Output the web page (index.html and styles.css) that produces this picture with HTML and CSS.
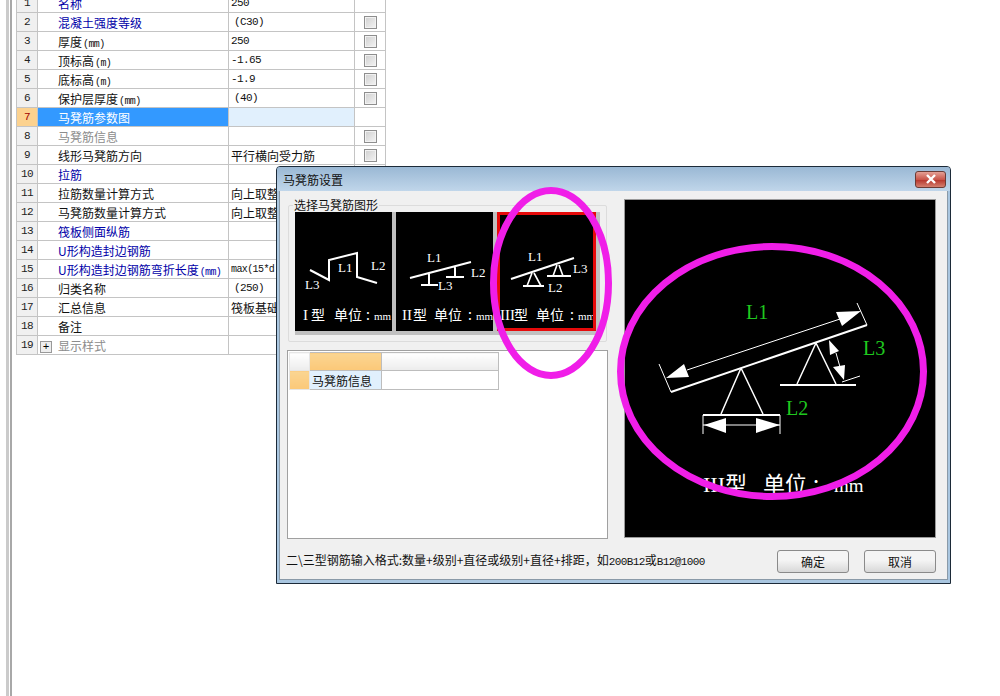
FILE: index.html
```html
<!DOCTYPE html>
<html lang="zh-CN">
<head>
  <meta charset="UTF-8" />
  <title>马凳筋设置</title>
  <link rel="stylesheet" href="styles.css">
</head>
<body>

  <div class="rail">
    <div class="rail-in">
      <div class="props">
        <div class="row"><div class="num">1</div><div class="name blue">名称</div><div class="val code">250</div><div class="chk"></div></div>
        <div class="row"><div class="num">2</div><div class="name blue">混凝土强度等级</div><div class="val code ind">(C30)</div><div class="chk"><span class="box"></span></div></div>
        <div class="row"><div class="num">3</div><div class="name">厚度<small>(mm)</small></div><div class="val code">250</div><div class="chk"><span class="box"></span></div></div>
        <div class="row"><div class="num">4</div><div class="name">顶标高<small>(m)</small></div><div class="val code">-1.65</div><div class="chk"><span class="box"></span></div></div>
        <div class="row"><div class="num">5</div><div class="name">底标高<small>(m)</small></div><div class="val code">-1.9</div><div class="chk"><span class="box"></span></div></div>
        <div class="row"><div class="num">6</div><div class="name">保护层厚度<small>(mm)</small></div><div class="val code ind">(40)</div><div class="chk"><span class="box"></span></div></div>
        <div class="row current"><div class="num">7</div><div class="name">马凳筋参数图</div><div class="val"></div><div class="chk"></div></div>
        <div class="row"><div class="num">8</div><div class="name gray">马凳筋信息</div><div class="val"></div><div class="chk"><span class="box"></span></div></div>
        <div class="row"><div class="num">9</div><div class="name">线形马凳筋方向</div><div class="val">平行横向受力筋</div><div class="chk"><span class="box"></span></div></div>
        <div class="row"><div class="num">10</div><div class="name blue">拉筋</div><div class="val"></div><div class="chk"></div></div>
        <div class="row"><div class="num">11</div><div class="name">拉筋数量计算方式</div><div class="val">向上取整</div><div class="chk"></div></div>
        <div class="row"><div class="num">12</div><div class="name">马凳筋数量计算方式</div><div class="val">向上取整</div><div class="chk"></div></div>
        <div class="row"><div class="num">13</div><div class="name blue">筏板侧面纵筋</div><div class="val"></div><div class="chk"></div></div>
        <div class="row"><div class="num">14</div><div class="name blue">U形构造封边钢筋</div><div class="val"></div><div class="chk"></div></div>
        <div class="row"><div class="num">15</div><div class="name blue">U形构造封边钢筋弯折长度<small>(mm)</small></div><div class="val code tiny">max(15*d</div><div class="chk"></div></div>
        <div class="row"><div class="num">16</div><div class="name">归类名称</div><div class="val code ind">(250)</div><div class="chk"></div></div>
        <div class="row"><div class="num">17</div><div class="name">汇总信息</div><div class="val">筏板基础</div><div class="chk"></div></div>
        <div class="row"><div class="num">18</div><div class="name">备注</div><div class="val"></div><div class="chk"></div></div>
        <div class="row"><div class="num">19</div><div class="name gray"><span class="plus">+</span>显示样式</div><div class="val"></div><div class="chk"></div></div>
      </div>
    </div>
  </div>

  <div class="dialog">
    <div class="titlebar">
      <span class="title">马凳筋设置</span>
      <button class="close">
        <svg width="12" height="10" viewBox="0 0 12 10"><path d="M2 1 L10 9 M10 1 L2 9" stroke="#fff" stroke-width="2.4" fill="none"/></svg>
      </button>
    </div>
    <div class="dlg-body">
      <div class="dlg-main">
        <div class="left">
          <div class="group">
            <span class="legend">选择马凳筋图形</span>
            <div class="thumbs">
              <div class="thumb">
                <svg class="thumb-art" width="97" height="119" viewBox="0 0 97 119">
                  <path d="M15 58 L34 68 L34 48 L62 41 L62 65 L82 71" class="bar"/>
                  <text x="43" y="60">L1</text>
                  <text x="76" y="58">L2</text>
                  <text x="10" y="77">L3</text>
                  <text class="cap-l" x="8" y="108">I</text>
                  <text class="cap" x="16" y="108">型</text>
                  <text class="cap" x="39" y="108">单位</text>
                  <text class="cap" x="71" y="108">:</text>
                  <text class="cap-m" x="79" y="108">mm</text>
                </svg>
              </div>
              <div class="thumb">
                <svg class="thumb-art" width="97" height="119" viewBox="0 0 97 119">
                  <path d="M14 66 L75 50 M33 61 L33 73 M25 73 L42 73 M59 55 L59 65 M50 65 L68 65" class="bar"/>
                  <text x="31" y="50">L1</text>
                  <text x="75" y="65">L2</text>
                  <text x="42" y="78">L3</text>
                  <text class="cap-l" x="6" y="108">II</text>
                  <text class="cap" x="17" y="108">型</text>
                  <text class="cap" x="38" y="108">单位</text>
                  <text class="cap" x="72" y="108">:</text>
                  <text class="cap-m" x="80" y="108">mm</text>
                </svg>
              </div>
              <div class="thumb selected">
                <svg class="thumb-art" width="99" height="119" viewBox="0 0 99 119">
                  <path d="M14 67 L77 46 M26 74 L47 74 M50 64 L74 64" class="bar"/>
                  <path d="M35 61 L30 74 M37 61 L44 74 M60 53 L56 64 M62 53 L66 64" class="bar thin"/>
                  <text x="31" y="49">L1</text>
                  <text x="76" y="61">L3</text>
                  <text x="51" y="80">L2</text>
                  <text class="cap-l" x="3" y="108">III</text>
                  <text class="cap" x="17" y="108">型</text>
                  <text class="cap" x="39" y="108">单位</text>
                  <text class="cap" x="73" y="108">:</text>
                  <text class="cap-m" x="81" y="108">mm</text>
                </svg>
              </div>
            </div>
          </div>
          <div class="grid-panel">
            <table class="mini">
              <tr class="mini-head"><td class="corner"></td><td class="hot"></td><td></td></tr>
              <tr><td class="hot"></td><td class="picked">马凳筋信息</td><td></td></tr>
            </table>
          </div>
        </div>
        <div class="preview">
          <svg class="preview-art" width="310" height="337" viewBox="0 0 310 337">
            <path d="M46 192 L242 125 M155 185 L231 185 M78 215 L155 215" class="heavy"/>
            <path d="M34 164 L46 192 M232 103 L242 125 M62 170 L215 119" class="lines"/>
            <path d="M41 178 L59 164 L64 177 Z M236 111 L211 112 L217 126 Z" fill="#fff"/>
            <path d="M116 168 L96 214 M116 168 L138 214 M191 143 L172 184 M191 143 L211 184" class="lines med"/>
            <path d="M78 215 L78 234 M155 215 L155 234 M78 225 L155 225 M217 182 L235 176 M211 153 L215 167" class="lines"/>
            <path d="M79 225 L101 218 L101 233 Z M155 225 L131 218 L131 233 Z M204 140 L205 155 L214 151 Z M219 180 L208 167 L220 165 Z" fill="#fff"/>
            <text x="121" y="119" class="dim">L1</text>
            <text x="238" y="155" class="dim">L3</text>
            <text x="161" y="215" class="dim">L2</text>
            <text x="78" y="292" class="big-l">III</text>
            <text x="100" y="292" class="big">型</text>
            <text x="138" y="292" class="big">单位</text>
            <text x="188" y="292" class="big">:</text>
            <text x="209" y="292" class="big-l small-m">mm</text>
          </svg>
        </div>
      </div>
      <div class="dlg-foot">
        <span class="hint">二\三型钢筋输入格式:数量+级别+直径或级别+直径+排距，如<span class="n">200B12</span>或<span class="n">B12@1000</span></span>
        <div class="actions">
          <button class="btn">确定</button>
          <button class="btn">取消</button>
        </div>
      </div>
    </div>
  </div>

  <!-- markup circles drawn on top of the screenshot -->
  <svg class="marks" width="1000" height="696">
    <ellipse cx="551" cy="283" rx="57.5" ry="92.5"/>
    <ellipse cx="772" cy="371.5" rx="151.5" ry="125"/>
  </svg>

</body>
</html>
```

FILE: styles.css
```css
* {
  box-sizing: border-box;
}

html, body {
  height: 100%;
}

body {
  margin: 0;
  background: #fff;
  color: #000;
  font-family: "Noto Sans CJK SC", "Liberation Sans", sans-serif;
  font-size: 12px;
  overflow: hidden;
}

/* property sheet behind the dialog */
.rail {
  height: 100%;
  margin-left: 6px;
  padding-left: 1px;
  border-left: 3px solid #cbcbcb;
}

.rail-in {
  height: 100%;
  padding-left: 4px;
  border-left: 2px solid #a8a8a8;
  overflow: hidden;
}

.props {
  width: 370px;
  margin-top: -6px;
  border-left: 1px solid #c4c4c4;
}

.row {
  display: grid;
  grid-template-columns: 21px 191px 126px 31px;
  height: 19px;
  border-bottom: 1px solid #c4c4c4;
  line-height: 19px;
  white-space: nowrap;
}

.row > div {
  height: 18px;
  overflow: hidden;
  border-right: 1px solid #c4c4c4;
}

.row small {
  font-family: "Liberation Mono", monospace;
  font-size: 10px;
  letter-spacing: -0.6px;
  margin-left: 1px;
}

.num {
  background: #f0f0f0;
  text-align: center;
  font-family: "Liberation Mono", monospace;
  font-size: 11px;
  letter-spacing: -0.6px;
  color: #222;
}

.name {
  padding-left: 20px;
  color: #111;
}

.blue { color: #0000a8; }
.gray { color: #8c8c8c; }

.val {
  padding-left: 2px;
  color: #111;
}

.code {
  font-family: "Liberation Mono", monospace;
  font-size: 11px;
  letter-spacing: -0.6px;
}

.ind { padding-left: 5px; }
.tiny { font-size: 10px; }

.chk {
  display: flex;
  align-items: center;
  justify-content: center;
}

.box {
  width: 13px;
  height: 13px;
  border: 1px solid #8e8e8e;
  background: linear-gradient(135deg, #cfcfcf, #f4f4f4);
  box-shadow: inset 0 0 0 1px #f2f2f2;
}

.current .num {
  background: #fcd28f;
  color: #a00000;
}

.current .name {
  background: #3399ff;
  color: #fff;
}

.current .val {
  background: #e1f0fd;
}

.plus {
  display: inline-block;
  width: 12px;
  height: 12px;
  margin: 0 6px 0 -18px;
  border: 1px solid #999;
  background: #eee;
  color: #000;
  font: 11px/10px "Liberation Mono", monospace;
  text-align: center;
  vertical-align: 1px;
}

/* dialog window */
.dialog {
  position: absolute;
  left: 276px;
  top: 166px;
  width: 675px;
  height: 418px;
  display: flex;
  flex-direction: column;
  border: 1px solid #1c2a38;
  border-radius: 4px 4px 0 0;
  background: #a9c6e0;
  padding: 0 2px 3px;
}

.titlebar {
  height: 24px;
  flex: none;
  display: flex;
  align-items: center;
  justify-content: space-between;
  padding: 0 4px 0 6px;
  margin: 0 -2px;
  background: linear-gradient(#9ab8d4, #c0d6ea);
  border-radius: 3px 3px 0 0;
}

.title {
  color: #111;
}

.close {
  width: 31px;
  height: 17px;
  padding: 0;
  display: flex;
  align-items: center;
  justify-content: center;
  border: 1px solid #6b3b35;
  border-radius: 3px;
  background: linear-gradient(#e4a095, #c9564a 50%, #b8392f 55%, #d4806f);
}

.dlg-body {
  flex: 1;
  min-height: 0;
  display: flex;
  flex-direction: column;
  background: #f0f0f0;
  padding: 8px 11px 6px 7px;
  border: 1px solid #8a9aa8;
  border-top: none;
}

.dlg-main {
  display: flex;
  justify-content: space-between;
  flex: 1;
  min-height: 0;
}

.left {
  width: 321px;
  display: flex;
  flex-direction: column;
  gap: 8px;
  padding-top: 6px;
}

.group {
  position: relative;
  flex: none;
  height: 137px;
  margin: 0 1px;
  padding: 6px 0 0 6px;
  border: 1px solid #dcdcdc;
  border-radius: 2px;
}

.legend {
  position: absolute;
  left: 4px;
  top: -7px;
  padding: 0 1px;
  background: #f0f0f0;
  line-height: 12px;
  height: 12px;
  color: #111;
}

.thumbs {
  display: flex;
  gap: 4px;
  width: 305px;
  height: 123px;
  background: #c0c0c0;
}

.thumb {
  height: 119px;
  background: #000;
}

.thumb.selected {
  outline: 3px solid #e60a0a;
  outline-offset: -3px;
}

.thumb-art {
  display: block;
}

.thumb-art text {
  font-family: "Liberation Serif", serif;
  font-size: 13px;
  fill: #fff;
}

.thumb-art .cap {
  font-family: "Noto Sans CJK SC", sans-serif;
  font-size: 14px;
}

.thumb-art .cap-l {
  font-size: 15px;
}

.thumb-art .cap-m {
  font-size: 11px;
}

.bar {
  fill: none;
  stroke: #fff;
  stroke-width: 2;
}

.bar.thin { stroke-width: 1.6; }

.grid-panel {
  flex: 1;
  background: #fff;
  border: 1px solid #a0a0a0;
  padding: 1px;
}

.mini {
  border-collapse: collapse;
  table-layout: fixed;
  width: 210px;
}

.mini td {
  height: 19px;
  padding: 0;
  border: 1px solid #bdbdbd;
  line-height: 17px;
}

.mini td:nth-child(1) { width: 20px; border-color: #e6e6e6; }
.mini td:nth-child(2) { width: 72px; }

.mini .mini-head td {
  height: 18px;
  background: linear-gradient(#fff, #ececec);
}

.mini .hot,
.mini .mini-head .hot {
  background: linear-gradient(#fad592, #fbc878);
}

.mini .picked {
  background: #e1f0fd;
  padding-left: 2px;
  color: #111;
}

.preview {
  flex: none;
  align-self: flex-start;
  width: 312px;
  height: 339px;
  background: #000;
  border: 1px solid #9a9a9a;
}

.preview-art {
  display: block;
}

.lines {
  fill: none;
  stroke: #fff;
  stroke-width: 1;
}

.lines.med { stroke-width: 1.5; }

.heavy {
  fill: none;
  stroke: #fff;
  stroke-width: 2;
}

.dim {
  font-family: "Liberation Serif", serif;
  font-size: 20px;
  fill: #1fc81f;
}

.big {
  font-family: "Noto Sans CJK SC", sans-serif;
  font-size: 22px;
  fill: #fff;
}

.big-l {
  font-family: "Liberation Serif", serif;
  font-size: 22px;
  fill: #fff;
}

.small-m {
  font-size: 19px;
}

.dlg-foot {
  flex: none;
  height: 34px;
  display: flex;
  align-items: flex-end;
  justify-content: space-between;
}

.hint {
  margin-left: -1px;
  line-height: 22px;
  white-space: nowrap;
  color: #111;
}

.n {
  font-family: "Liberation Mono", monospace;
  font-size: 11px;
  letter-spacing: -0.6px;
}

.actions {
  display: flex;
  gap: 15px;
}

.btn {
  width: 72px;
  height: 23px;
  padding: 0;
  border: 1px solid #8a8a8a;
  border-radius: 3px;
  background: linear-gradient(#f4f4f4 45%, #d8d8d8);
  font: 12px "Noto Sans CJK SC", sans-serif;
  color: #111;
}

.marks {
  position: absolute;
  left: 0;
  top: 0;
  pointer-events: none;
}

.marks ellipse {
  fill: none;
  stroke: #f01ee8;
  stroke-width: 7;
}
```
